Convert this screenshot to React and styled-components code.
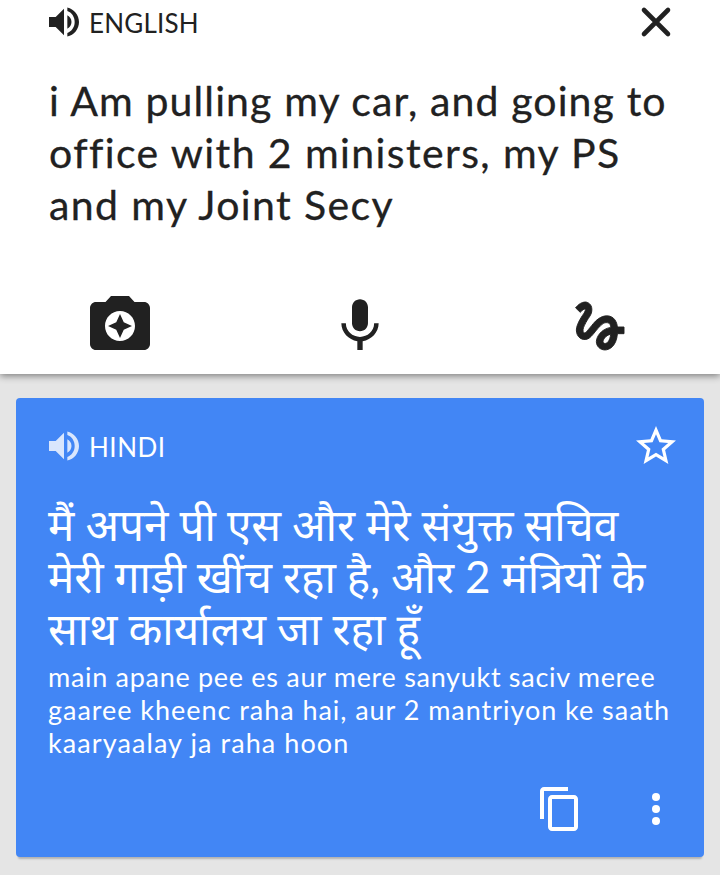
import React from "react";
import styled, { createGlobalStyle } from "styled-components";

const GlobalStyle = createGlobalStyle`
  * {
    box-sizing: border-box;
  }
  body {
    margin: 0;
    background: #e5e5e5;
  }
`;

const Page = styled.div`
  width: 720px;
  height: 875px;
  overflow: hidden;
  background: #e5e5e5;
  font-family: "Lato", "Noto Sans Devanagari", "Noto Sans", sans-serif;
`;

const SourcePanel = styled.section`
  height: 374px;
  background: #fff;
  color: #212121;
  box-shadow: 0 2px 7px rgba(0, 0, 0, 0.45);
`;

const ResultCard = styled.section`
  height: 459px;
  margin: 24px 16px 0;
  border-radius: 4px;
  background: #4286f5;
  color: #fff;
  box-shadow: 0 4px 2px -2px rgba(0, 0, 0, 0.22);
`;

const Header = styled.header`
  display: flex;
  align-items: center;
  height: ${(props) => (props.$card ? "96px" : "44px")};
  padding: ${(props) => (props.$card ? "0 24px 0 28px" : "0 48px 0 44px")};
`;

const Language = styled.span`
  flex: 1;
  padding: 2px 0 0 5px;
  font-size: 26px;
  line-height: 32px;
  letter-spacing: ${(props) => props.$spacing}px;
`;

const Icon = styled.svg`
  display: block;
  flex: none;
  width: ${(props) => props.$size}px;
  height: ${(props) => props.$size}px;
  margin-bottom: ${(props) => props.$lift || 0}px;
  fill: currentColor;
  opacity: ${(props) => props.$opacity || 1};
`;

const SourceText = styled.div`
  height: 206px;
  padding: 31px 0 0 49px;
  font-size: 41px;
  -webkit-text-stroke: 0.3px currentColor;
`;

const Translation = styled.div`
  padding: 4px 0 0 32px;
  font-size: 44px;
`;

const Romanized = styled.div`
  height: 131px;
  padding: 6px 0 0 32px;
  font-size: 27px;
`;

const Line = styled.div`
  height: ${(props) => props.$height}px;
  line-height: ${(props) => props.$height}px;
  white-space: nowrap;
  letter-spacing: ${(props) => props.$spacing || 0}px;
  word-spacing: ${(props) => props.$gap || 0}px;
`;

const InputModes = styled.div`
  display: grid;
  grid-template-columns: repeat(3, 240px);
  justify-items: center;
  align-items: end;
  height: 109px;
`;

const CardActions = styled.div`
  display: flex;
  justify-content: flex-end;
  gap: 48px;
  padding: 0 24px;
`;

const sourceLines = [
  ["i Am pulling my car, and going to", 1.12],
  ["office with 2 ministers, my PS", 1.4],
  ["and my Joint Secy", 1.4],
];

const hindiLines = [
  ["मैं अपने पी एस और मेरे संयुक्त सचिव", -0.2],
  ["मेरी गाड़ी खींच रहा है, और 2 मंत्रियों के", -0.3],
  ["साथ कार्यालय जा रहा हूँ", 0],
];

const romanLines = [
  ["main apane pee es aur mere sanyukt saciv meree", 0.7],
  ["gaaree kheenc raha hai, aur 2 mantriyon ke saath", 0.96],
  ["kaaryaalay ja raha hoon", 1.08],
];

function Speaker({ opacity }) {
  return (
    <Icon viewBox="0 0 24 24" $size={40} $opacity={opacity}>
      <path d="M3 9v6h4l5 5V4L7 9H3zm13.5 3c0-1.77-1.02-3.29-2.5-4.03v8.05c1.48-.73 2.5-2.25 2.5-4.02zM14 3.23v2.2c2.6.9 4.4 3.5 4.4 6.57s-1.8 5.67-4.4 6.57v2.2c4.01-.91 7-4.49 7-8.77s-2.99-7.86-7-8.77z" />
    </Icon>
  );
}

function App() {
  return (
    <>
      <GlobalStyle />
      <Page>
        <SourcePanel>
          <Header>
            <Speaker />
            <Language $spacing={0.2}>ENGLISH</Language>
            {/* close */}
            <Icon viewBox="4 4 16 16" $size={32}>
              <path
                d="M6 6L18 18M18 6L6 18"
                stroke="currentColor"
                strokeWidth="2.3"
                strokeLinecap="round"
              />
            </Icon>
          </Header>
          <SourceText>
            {sourceLines.map(([text, spacing]) => (
              <Line key={text} $height={52} $spacing={spacing}>
                {text}
              </Line>
            ))}
          </SourceText>
          <InputModes>
            <Icon viewBox="0 0 24 24" $size={72}>
              <path d="M9 3L7.17 5H4c-1.1 0-2 .9-2 2v12c0 1.1.9 2 2 2h16c1.1 0 2-.9 2-2V7c0-1.1-.9-2-2-2h-3.17L15 3H9zm3 15c-2.76 0-5-2.24-5-5s2.24-5 5-5 5 2.24 5 5-2.24 5-5 5z" />
              <path d="M12 17l1.25-2.75L16 13l-2.75-1.25L12 9l-1.25 2.75L8 13l2.75 1.25z" />
            </Icon>
            <Icon viewBox="0 0 24 24" $size={64} $lift={1}>
              <path d="M12 14c1.66 0 2.99-1.34 2.99-3L15 5c0-1.66-1.34-3-3-3S9 3.34 9 5v6c0 1.66 1.34 3 3 3zm5.3-3c0 3-2.54 5.1-5.3 5.1S6.7 14 6.7 11H5c0 3.41 2.72 6.23 6 6.72V21h2v-3.28c3.28-.48 6-3.3 6-6.72h-1.7z" />
            </Icon>
            <Icon viewBox="0 0 24 24" $size={64} $lift={1}>
              <path
                stroke="currentColor"
                strokeWidth="0.35"
                d="M4.59 6.89c.7-.71 1.4-1.35 1.71-1.22.5.2 0 1.03-.3 1.52-.25.42-2.86 3.89-2.86 6.31 0 1.28.48 2.34 1.34 2.98.75.56 1.74.73 2.64.46 1.07-.31 1.95-1.4 3.06-2.77 1.21-1.49 2.83-3.44 4.08-3.44 1.63 0 1.65 1.01 1.76 1.79-3.78.64-5.38 3.67-5.38 5.37 0 1.7 1.44 3.09 3.21 3.09 1.63 0 4.29-1.33 4.69-6.1H21v-2.5h-2.47c-.15-1.65-1.09-4.2-4.03-4.2-2.25 0-4.18 1.91-4.94 2.84-.58.73-2.06 2.48-2.29 2.72-.25.3-.68.84-1.11.84-.45 0-.72-.83-.36-1.92.35-1.09 1.4-2.86 1.85-3.52.78-1.14 1.3-1.92 1.3-3.28C8.95 3.69 7.31 3 6.44 3 5.12 3 3.97 4 3.72 4.25c-.36.36-.66.66-.88.93l1.75 1.71zm9.29 11.66c-.31 0-.74-.26-.74-.72 0-.6.73-2.2 2.87-2.76-.3 2.69-1.43 3.48-2.13 3.48z"
              />
            </Icon>
          </InputModes>
        </SourcePanel>

        <ResultCard>
          <Header $card>
            <Speaker opacity={0.8} />
            <Language $spacing={0.5}>HINDI</Language>
            <Icon viewBox="0 0 24 24" $size={48}>
              <path d="M22 9.24l-7.19-.62L12 2 9.19 8.63 2 9.24l5.46 4.73L5.82 21 12 17.27 18.18 21l-1.63-7.03L22 9.24zM12 15.4l-3.76 2.27 1-4.28-3.32-2.88 4.38-.38L12 6.1l1.71 4.04 4.38.38-3.32 2.88 1 4.28L12 15.4z" />
            </Icon>
          </Header>
          {/* "sa" picks the joined form of क्त */}
          <Translation lang="sa">
            {hindiLines.map(([text, gap]) => (
              <Line key={text} $height={52} $gap={gap}>
                {text}
              </Line>
            ))}
          </Translation>
          <Romanized>
            {romanLines.map(([text, spacing]) => (
              <Line key={text} $height={33} $spacing={spacing}>
                {text}
              </Line>
            ))}
          </Romanized>
          <CardActions>
            <Icon viewBox="0 0 24 24" $size={48}>
              <path d="M16 1H4c-1.1 0-2 .9-2 2v14h2V3h12V1zm3 4H8c-1.1 0-2 .9-2 2v14c0 1.1.9 2 2 2h11c1.1 0 2-.9 2-2V7c0-1.1-.9-2-2-2zm0 16H8V7h11v14z" />
            </Icon>
            <Icon viewBox="0 0 24 24" $size={48}>
              <circle cx="12" cy="6" r="2" />
              <circle cx="12" cy="12" r="2" />
              <circle cx="12" cy="18" r="2" />
            </Icon>
          </CardActions>
        </ResultCard>
      </Page>
    </>
  );
}

export default App;
